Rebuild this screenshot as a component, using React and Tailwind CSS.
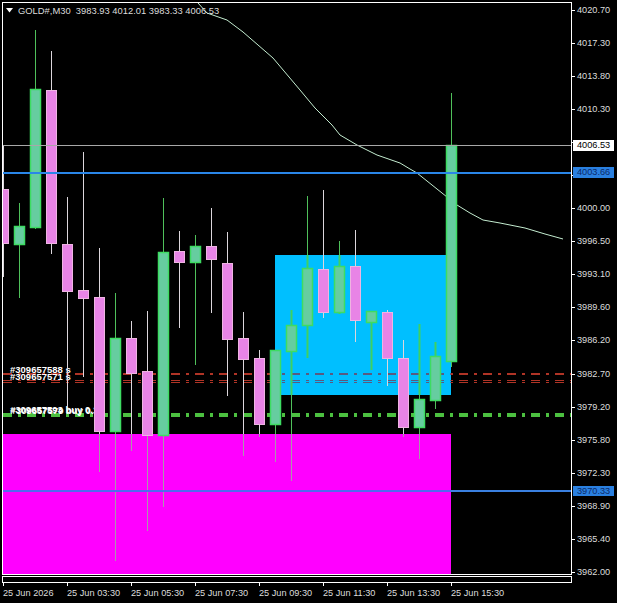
import React from "react";

// kind, x center, high, body top, body bottom, low
const candles = [
  ["down", 3.5, 145, 189, 243, 277],
  ["up", 19.5, 203, 226, 244, 298],
  ["up", 35.5, 30, 89, 227, 229],
  ["down", 51.5, 51, 90, 243, 254],
  ["down", 67.5, 197, 244, 291, 407],
  ["down", 83.5, 152, 290, 298, 377],
  ["down", 99.5, 248, 297, 431, 472],
  ["up", 115.5, 293, 338, 431, 561],
  ["down", 131.5, 321, 338, 373, 451],
  ["down", 147.5, 311, 371, 435, 531],
  ["up", 163.5, 198, 252, 435, 507],
  ["down", 179.5, 231, 251, 262, 328],
  ["up", 195.5, 235, 246, 262, 365],
  ["down", 211.5, 208, 246, 259, 313],
  ["down", 227.5, 232, 263, 339, 396],
  ["down", 243.5, 312, 338, 359, 456],
  ["down", 259.5, 350, 358, 424, 437],
  ["up", 275.5, 350, 350, 424, 462],
  ["up", 291.5, 310, 325, 351, 481],
  ["up", 307.5, 196, 268, 325, 358],
  ["down", 323.5, 190, 269, 312, 318],
  ["up", 339.5, 241, 266, 312, 314],
  ["down", 355.5, 230, 266, 320, 342],
  ["up", 371.5, 311, 311, 322, 370],
  ["down", 387.5, 310, 312, 358, 386],
  ["down", 403.5, 340, 358, 427, 437],
  ["up", 419.5, 324, 399, 427, 459],
  ["up", 435.5, 342, 356, 400, 409],
  ["up", 451.5, 93, 145, 361, 367],
];

const maLine =
  "198,3 207,13 227,20 243,32 273,58 300,90 315,108 332,125 340,135 357,145 377,155 400,163 410,169 417,173 447,197 457,205 470,213 483,220 500,223 525,228 545,234 563,239";

// the two empty rows sit under the price tags
const prices = [
  "4020.70", "4017.30", "4013.80", "4010.30", "", "", "4000.00", "3996.50", "3993.10",
  "3989.60", "3986.20", "3982.70", "3979.20", "3975.80", "3972.30", "3968.90", "3965.40", "3962.00",
];

const times = [
  "25 Jun 2026", "25 Jun 03:30", "25 Jun 05:30", "25 Jun 07:30",
  "25 Jun 09:30", "25 Jun 11:30", "25 Jun 13:30", "25 Jun 15:30",
];

function Candle({ kind, x, high, top, bottom, low }) {
  const up = kind === "up";
  const wick = up ? "#4fc05a" : "#dcd6dc";
  return (
    <g>
      <line x1={x} x2={x} y1={high} y2={Math.min(low, 434)} stroke={wick} />
      {low > 434 && <line x1={x} x2={x} y1={434} y2={low} stroke="#a898a8" />}
      {up && x > 275 && x < 451 && (
        <line x1={x} x2={x} y1={Math.max(high, 255)} y2={Math.min(low, 395)} stroke="#3fd060" strokeWidth="2" />
      )}
      <rect
        x={x - 5}
        y={top + 0.5}
        width={10}
        height={bottom - top}
        fill={up ? "#66cda0" : "#e884e6"}
        stroke={up ? "#3ddc62" : "#eeb4e2"}
        strokeWidth={up ? 1.5 : 1}
      />
    </g>
  );
}

function DashLine({ y, color, width = 1, x1 = 3, x2 = 571 }) {
  return <line x1={x1} x2={x2} y1={y} y2={y} stroke={color} strokeWidth={width} strokeDasharray="9 6 3 6" />;
}

function Chart() {
  return (
    <svg className="block w-full h-full" viewBox="3 3 568 571">
      <rect x="275" y="255" width="176" height="140" fill="#00bfff" />
      <rect x="3" y="434" width="448" height="140" fill="#ff00ff" />

      <DashLine y={374} color="#b03426" width={2} />
      <DashLine y={380.5} color="#b03426" />
      <DashLine y={382.5} color="#b03426" />
      {/* same dashes read grey-blue where they cross the blue box */}
      <svg x="275" y="365" width="176" height="25" viewBox="275 365 176 25">
        <DashLine y={374} color="#5a5a80" width={2} />
        <DashLine y={380.5} color="#5a5a80" />
        <DashLine y={382.5} color="#5a5a80" />
      </svg>
      <DashLine y={415} color="#4cc040" width={4} />

      <g className="fill-white font-bold text-[9.5px]">
        <text x="10" y="373">#309657588 s</text>
        <text x="10" y="380">#309657571 s</text>
        <text x="10" y="413">#309657593 buy 0.1</text>
        <text x="10.6" y="413.6">#309657579 buy 0.1</text>
      </g>

      <polyline points={maLine} fill="none" stroke="#c4ecd0" strokeWidth="1" />

      {candles.map((c) => (
        <Candle key={c[1]} kind={c[0]} x={c[1]} high={c[2]} top={c[3]} bottom={c[4]} low={c[5]} />
      ))}

      <line x1="3" x2="571" y1="145.5" y2="145.5" stroke="#a8a8a8" />
      <line x1="3" x2="571" y1="173" y2="173" stroke="#2a86e8" strokeWidth="2" />
      <line x1="3" x2="451" y1="491" y2="491" stroke="#5566ee" strokeWidth="2" />
      <line x1="451" x2="571" y1="491" y2="491" stroke="#3a80e0" strokeWidth="2" />

      <polygon points="6,8 13,8 9.5,12.5" fill="#ffffff" />
      <text x="18" y="14" className="fill-[#dddddd] text-[9.4px]" xmlSpace="preserve">
        GOLD#,M30  3983.93 4012.01 3983.33 4006.53
      </text>
    </svg>
  );
}

export default function App() {
  return (
    <div className="w-[617px] h-[603px] bg-black flex pt-[2px] pl-[2px] overflow-hidden text-[9.2px] text-[#dddddd] [font-family:'Liberation_Sans',sans-serif]">
      <div className="w-[570px] flex flex-col">
        <div className="h-[573px] border border-white">
          <Chart />
        </div>
        <div className="h-[7px] mt-px border border-white" />
        <div className="flex">
          {times.map((t) => (
            <div key={t} className="w-[64px] pl-px">
              <div className="w-px h-[3px] bg-white" />
              <div className="leading-3 mt-[1px] whitespace-nowrap">{t}</div>
            </div>
          ))}
        </div>
      </div>

      <div className="relative flex-1 mt-[2px]">
        {prices.map((p, i) => (
          <div key={i} className="h-[33.06px] flex items-start">
            <div className="w-[3px] h-px bg-white mt-[6px]" />
            <div className="ml-[2px] h-3 leading-3">{p}</div>
          </div>
        ))}
        <div className="absolute left-px top-[136px] w-[41px] h-[11px] bg-white text-black leading-[11px] pl-1">4006.53</div>
        <div className="absolute left-px top-[163px] w-[41px] h-[11px] bg-[#2a80e0] text-[#0a2a6a] leading-[11px] pl-1">4003.66</div>
        <div className="absolute left-px top-[482px] w-[41px] h-[10px] bg-[#2a80e0] text-[#0a2a6a] leading-[10px] pl-1">3970.33</div>
      </div>
    </div>
  );
}
